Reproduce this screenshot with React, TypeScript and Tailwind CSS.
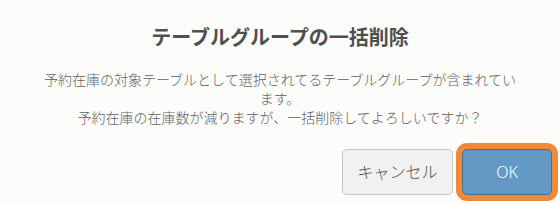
export default function App() {
  return (
    <div
      className="w-[560px] h-[204px] bg-[#fcfcfb] flex flex-col overflow-hidden"
      style={{ fontFamily: '"Noto Sans", "Noto Sans CJK JP", sans-serif' }}
    >
      {/* タイトル */}
      <h1 className="pt-[24px] text-center text-[20px] leading-[28px] font-bold text-[#4f4f4f]">
        テーブルグループの一括削除
      </h1>

      {/* 本文 */}
      <p className="mt-[18px] px-[40px] text-center text-[14px] leading-[19px] font-light text-[#5f5f5f]">
        予約在庫の対象テーブルとして選択されてるテーブルグループが含まれています。
        <br />
        予約在庫の在庫数が減りますが、一括削除してよろしいですか？
      </p>

      {/* ボタン */}
      <div className="mt-auto flex justify-end items-start gap-[9px] pr-[8px] pb-[9px]">
        <button className="w-[111px] h-[46px] rounded-[5px] border border-[#c6c6c6] bg-[#f1f1f1] text-[16px] font-light text-[#4f4f4f]">
          キャンセル
        </button>
        <button className="w-[90px] h-[46px] rounded-[5px] border border-[#41709a] bg-[#6399c4] text-[16px] font-light text-white ring-[6px] ring-[#ef8a3b]">
          OK
        </button>
      </div>
    </div>
  );
}
